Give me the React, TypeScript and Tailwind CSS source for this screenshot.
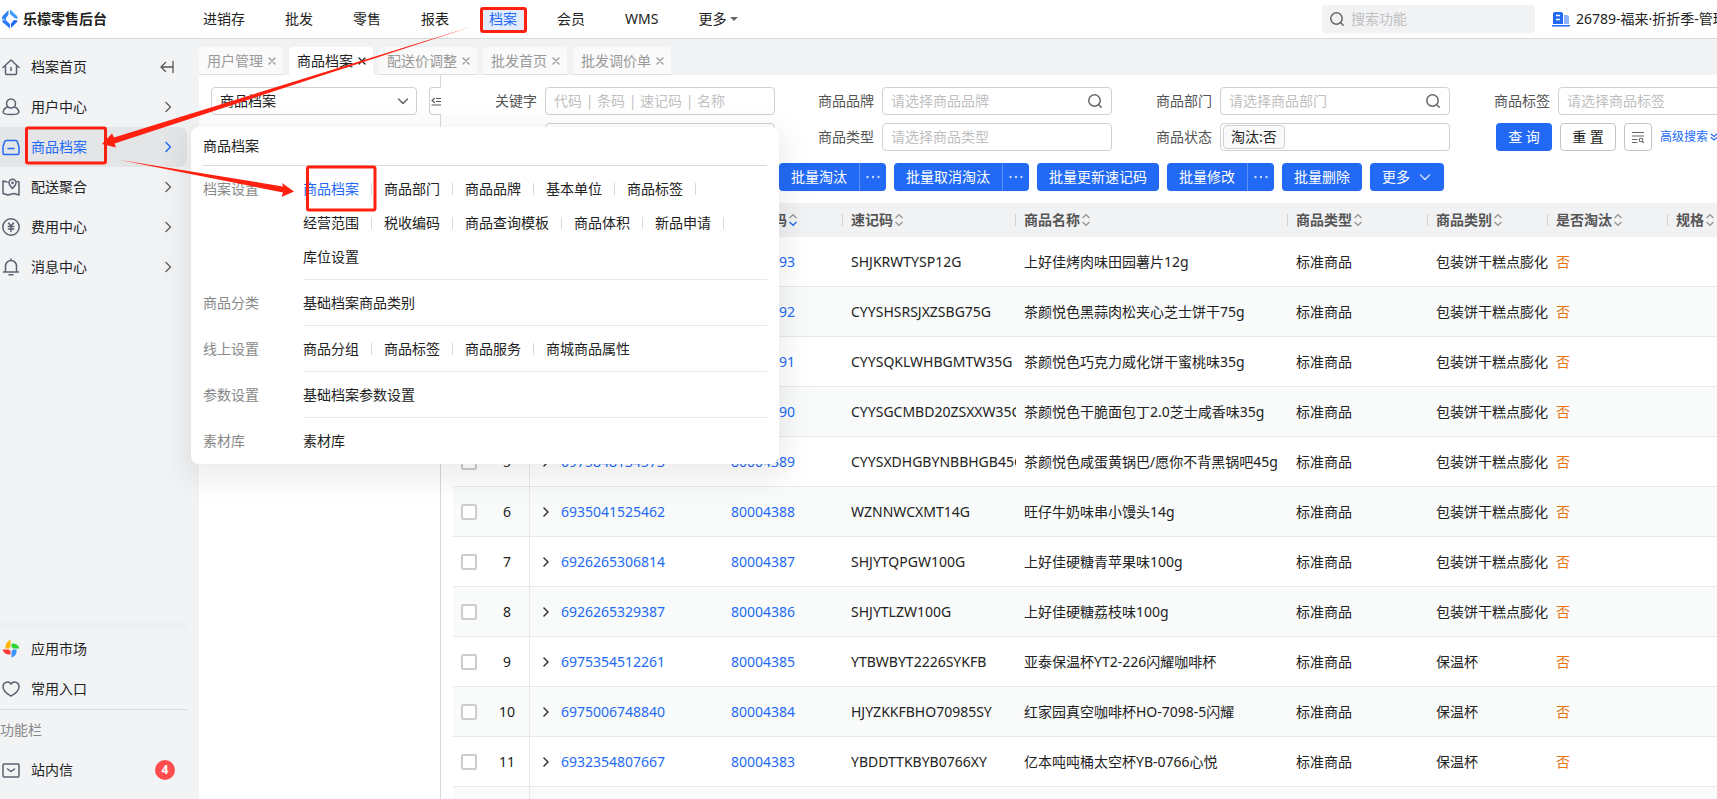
import { ReactNode } from "react";

type Row = { id: number; barcode: string; code: string; mnemonic: string; name: string; category: string };

const navItems = ["进销存", "批发", "零售", "报表", "档案", "会员", "WMS"];
const tabs = ["用户管理", "商品档案", "配送价调整", "批发首页", "批发调价单"];

const snack = "包装饼干糕点膨化";
const rows: Row[] = [
	{ id: 1, barcode: "6926265353061", code: "80004393", mnemonic: "SHJKRWTYSP12G", name: "上好佳烤肉味田园薯片12g", category: snack },
	{ id: 2, barcode: "6975848134597", code: "80004392", mnemonic: "CYYSHSRSJXZSBG75G", name: "茶颜悦色黑蒜肉松夹心芝士饼干75g", category: snack },
	{ id: 3, barcode: "6975848134580", code: "80004391", mnemonic: "CYYSQKLWHBGMTW35G", name: "茶颜悦色巧克力威化饼干蜜桃味35g", category: snack },
	{ id: 4, barcode: "6975848134566", code: "80004390", mnemonic: "CYYSGCMBD20ZSXXW35G", name: "茶颜悦色干脆面包丁2.0芝士咸香味35g", category: snack },
	{ id: 5, barcode: "6975848134573", code: "80004389", mnemonic: "CYYSXDHGBYNBBHGB45G", name: "茶颜悦色咸蛋黄锅巴/愿你不背黑锅吧45g", category: snack },
	{ id: 6, barcode: "6935041525462", code: "80004388", mnemonic: "WZNNWCXMT14G", name: "旺仔牛奶味串小馒头14g", category: snack },
	{ id: 7, barcode: "6926265306814", code: "80004387", mnemonic: "SHJYTQPGW100G", name: "上好佳硬糖青苹果味100g", category: snack },
	{ id: 8, barcode: "6926265329387", code: "80004386", mnemonic: "SHJYTLZW100G", name: "上好佳硬糖荔枝味100g", category: snack },
	{ id: 9, barcode: "6975354512261", code: "80004385", mnemonic: "YTBWBYT2226SYKFB", name: "亚泰保温杯YT2-226闪耀咖啡杯", category: "保温杯" },
	{ id: 10, barcode: "6975006748840", code: "80004384", mnemonic: "HJYZKKFBHO70985SY", name: "红家园真空咖啡杯HO-7098-5闪耀", category: "保温杯" },
	{ id: 11, barcode: "6932354807667", code: "80004383", mnemonic: "YBDDTTKBYB0766XY", name: "亿本吨吨桶太空杯YB-0766心悦", category: "保温杯" },
];

const sections = [
	{
		label: "档案设置",
		items: ["商品档案", "商品部门", "商品品牌", "基本单位", "商品标签", "经营范围", "税收编码", "商品查询模板", "商品体积", "新品申请", "库位设置"],
	},
	{ label: "商品分类", items: ["基础档案商品类别"] },
	{ label: "线上设置", items: ["商品分组", "商品标签", "商品服务", "商城商品属性"] },
	{ label: "参数设置", items: ["基础档案参数设置"] },
	{ label: "素材库", items: ["素材库"] },
];

const Icon = ({ children, size = 18, className = "" }: { children: ReactNode; size?: number; className?: string }) => (
	<svg
		width={size}
		height={size}
		viewBox={`0 0 ${size} ${size}`}
		fill="none"
		stroke="currentColor"
		strokeWidth="1.5"
		strokeLinecap="round"
		strokeLinejoin="round"
		aria-hidden="true"
		className={`shrink-0 ${className}`}>
		{children}
	</svg>
);

const SearchIcon = () => (
	<Icon size={16} className="text-[#666666]">
		<circle cx="7.5" cy="7.5" r="5.7" />
		<path d="M11.8 11.8 14.2 14.2" />
	</Icon>
);

const ChevronRight = () => (
	<Icon size={12}>
		<path d="M4 1.5 8.5 6 4 10.5" />
	</Icon>
);

const ExpandIcon = () => (
	<Icon size={10} className="text-[#333333]">
		<path d="M2 1 6 5 2 9" />
	</Icon>
);

const ChevronDown = ({ className = "" }: { className?: string }) => (
	<Icon size={12} className={className}>
		<path d="M1.5 4 6 8.5 10.5 4" />
	</Icon>
);

const Close = () => (
	<Icon size={8}>
		<path d="M1 1 7 7M7 1 1 7" strokeWidth="1.3" />
	</Icon>
);

const Sorter = ({ active = false }: { active?: boolean }) => (
	<svg width="8" height="14" viewBox="0 0 8 14" fill="none" strokeWidth="1.4" aria-hidden="true" className="shrink-0">
		<path d="M.5 5 4 1.8 7.500 5" stroke="#999999" />
		<path d="M.5 9 4 12.2 7.500 9" stroke={active ? "#226af5" : "#999999"} />
	</svg>
);

const menu = [
	{
		label: "用户中心",
		icon: (
			<>
				<circle cx="9" cy="5.500" r="4.500" />
				<path d="M5.500 9C3 10 1.200 12 1.200 14.200c0 3 15.600 3 15.600 0C16.800 12 15 10 12.500 9" />
			</>
		),
	},
	{
		label: "商品档案",
		icon: (
			<>
				<path d="M4.500 2.500h9q1.500 0 2 1.500L17 9v6q0 1.500-1.500 1.500h-13Q1 16.500 1 15V9L2.500 4Q3 2.500 4.500 2.500Z" />
				<path d="M6 10.500h6" />
			</>
		),
	},
	{
		label: "配送聚合",
		icon: (
			<>
				<path d="M5 4 1 3v12.500l5 1.500 6-1.500 5 1.500V4l-2-.500" />
				<path d="M10.500 10.500C8.500 8.500 7 7 7 4.800a3.500 3.500 0 0 1 7 0c0 2.200-1.500 3.700-3.500 5.700Z" />
				<circle cx="10.500" cy="4.800" r=".6" />
			</>
		),
	},
	{
		label: "费用中心",
		icon: (
			<>
				<circle cx="9" cy="9" r="8.200" />
				<path d="M6.500 5 9 8l2.500-3M9 8v5.500M6.300 8.500h5.400M6.300 11h5.400" />
			</>
		),
	},
	{
		label: "消息中心",
		icon: (
			<>
				<path d="M1.500 14h15M3.500 14V8a5.500 5.500 0 0 1 11 0v6M9 1v1.500M7 16.800h4" />
			</>
		),
	},
];

const MenuItem = ({ label, icon, active, children }: { label: string; icon: ReactNode; active?: boolean; children?: ReactNode }) => (
	<a
		href="#"
		className={`mr-3 flex h-10 items-center rounded-r-lg pl-[2px] pr-[13px] ${active ? "bg-[#e4e5e7] text-[#226af5]" : "text-[#222222]"}`}>
		<span className={active ? "text-[#226af5]" : "text-[#5c6070]"}>{icon}</span>
		<span className="ml-[11px] flex-1">{label}</span>
		{children}
	</a>
);

const Sidebar = () => (
	<aside className="flex w-[199px] shrink-0 flex-col bg-[#f1f3f5] pt-2">
		<nav>
			<MenuItem
				label="档案首页"
				icon={
					<Icon>
						<path d="M1 9.500 9 2 17 9.500M3.500 8V15.500q0 1 1 1h9q1 0 1-1V8M9 9.500v3" />
					</Icon>
				}>
				<Icon size={14} className="text-[#555555]">
					<path d="M5.500 2.500 1 7l4.500 4.500M1 7h11M13 1.500v11" strokeWidth="1.3" />
				</Icon>
			</MenuItem>
			{menu.map((m) => (
				<MenuItem key={m.label} label={m.label} active={m.label === "商品档案"} icon={<Icon>{m.icon}</Icon>}>
					<span className={m.label === "商品档案" ? "text-[#226af5]" : "text-[#666666]"}>
						<ChevronRight />
					</span>
				</MenuItem>
			))}
		</nav>
		<div className="mt-auto pb-[9px]">
			<div className="mr-3 h-2 bg-[#eff0f2]" />
			<MenuItem
				label="应用市场"
				icon={
					<svg width="18" height="18" viewBox="0 0 18 18" aria-hidden="true">
						<path d="M8.500 0C5 1.200 3 4.500 3.600 8.500h4.900Z" fill="#ffb400" />
						<path d="M17.500 8.500C16.500 5 13.500 3 9.500 3.500v5Z" fill="#2bd435" />
						<path d="M9.500 17.500C13 16.500 15 13.500 14.500 9.500h-5Z" fill="#3b94ff" />
						<path d="M.5 9.500C1.500 13 4.500 15 8.500 14.500v-5Z" fill="#ff3838" />
						<circle cx="9" cy="9" r="2" fill="#f1f3f5" />
					</svg>
				}
			/>
			<MenuItem
				label="常用入口"
				icon={
					<Icon>
						<path d="M9 4C7 .8 1.200 1.500 1 6.800.9 11 6 14.500 9 16.200c3-1.700 8.100-5.200 8-9.400C16.800 1.500 11 .8 9 4Z" />
					</Icon>
				}
			/>
			<div className="mr-3 border-t border-[#d8dadd]" />
			<div className="flex h-10 items-center text-[#888888]">功能栏</div>
			<MenuItem
				label="站内信"
				icon={
					<Icon>
						<rect x="1" y="3" width="16" height="13" rx="1" />
						<path d="M5.500 8 9 10.500 12.500 8" />
					</Icon>
				}>
				<span className="-mr-px flex size-5 items-center justify-center rounded-full bg-[#ff4d4f] text-xs font-bold text-white">4</span>
			</MenuItem>
		</div>
	</aside>
);

const Header = () => (
	<header className="flex h-[39px] items-center overflow-hidden whitespace-nowrap border-b border-[#d9d9d9] bg-white">
		<a href="#" className="flex w-[203px] shrink-0 items-center gap-[5px] pl-[2px] font-bold">
			<svg width="16" height="20" viewBox="0 0 16 20" aria-hidden="true">
				<path d="M6.500 1v4.500L4 9v2L0 10V8.500q0-1 1-2Z" fill="#2f86fb" />
				<path d="M8 .500 14.500 6.500q1 1 1 2V10L12.500 9 8 5Z" fill="#3f9cff" />
				<path d="M0 11.500l3.500-.500L8 15v4.500L1 13.500q-1-1-1-2Z" fill="#2a7bfa" />
				<path d="M15.500 11.500q0 1-1 2L9 19v-4.500L12 11Z" fill="#226af5" />
			</svg>
			<span>乐檬零售后台</span>
		</a>
		<nav className="flex flex-1 items-center gap-10">
			{navItems.map((n) => (
				<a key={n} href="#" className={n === "档案" ? "relative text-[#226af5]" : ""}>
					{n === "档案" && <span className="absolute -inset-x-2 -inset-y-[2px] bg-[#e3ecfd]" />}
					<span className="relative">{n}</span>
				</a>
			))}
			<button className="flex items-center gap-1">
				更多
				<svg width="8" height="4" viewBox="0 0 8 4" fill="#666666" aria-hidden="true">
					<path d="M0 0h8L4 4Z" />
				</svg>
			</button>
		</nav>
		<div className="flex w-[395px] shrink-0 items-center">
			<label className="flex h-7 w-[213px] shrink-0 items-center gap-[6px] rounded bg-[#f1f2f4] pl-[7px]">
				<SearchIcon />
				<input aria-label="搜索功能" placeholder="搜索功能" className="w-40 bg-transparent outline-none placeholder:text-[#bfbfbf]" />
			</label>
			<svg width="18" height="15" viewBox="0 0 18 15" aria-hidden="true" className="ml-[17px] shrink-0">
				<path d="M1 12V2q0-2 2-2h6q2 0 2 2v10Z" fill="#226af5" />
				<path d="M4 3.500h4M4 7.500h4" stroke="#ffffff" strokeWidth="1.5" />
				<path d="M12 3h3q2 0 2 2v7h-5Z" fill="#8db4fa" />
				<path d="M0 13h18v1.500H0Z" fill="#226af5" />
			</svg>
			<span className="ml-[6px]">26789-福来·折折季-管理</span>
		</div>
	</header>
);

const Tabs = () => (
	<div className="flex items-end gap-[6px] bg-[#f1f2f4] pt-2">
		{tabs.map((t) => (
			<div
				key={t}
				className={`flex h-7 items-center gap-[5px] whitespace-nowrap rounded-t pl-2 pr-[7px] ${
					t === "商品档案" ? "bg-white text-[#222222]" : "border-b border-[#dcdcdc] bg-[#fafafa] text-[#999999]"
				}`}>
				<a href="#">{t}</a>
				<button aria-label={`关闭${t}`}>
					<Close />
				</button>
			</div>
		))}
	</div>
);

const Field = ({ label, placeholder, search, tag }: { label: string; placeholder?: string; search?: boolean; tag?: string }) => (
	<label className="flex items-center justify-end gap-2 text-[#555555]">
		{label}
		<span className="flex h-7 w-[230px] items-center rounded border border-[#d0d0d0] bg-white pl-[2px] pr-2">
			{tag && <span className="shrink-0 rounded border border-[#d0d0d0] bg-[#fafafa] px-[7px] leading-[22px] text-[#222222]">{tag}</span>}
			<input placeholder={placeholder} className="w-full min-w-0 bg-transparent pl-[6px] outline-none placeholder:text-[#bfbfbf]" />
			{search && <SearchIcon />}
		</span>
	</label>
);

const Filters = () => (
	<div className="grid grid-cols-[334px_337px_338px_338px] gap-y-2 whitespace-nowrap pt-3">
		<Field label="关键字" placeholder="代码 | 条码 | 速记码 | 名称" />
		<Field label="商品品牌" placeholder="请选择商品品牌" search />
		<Field label="商品部门" placeholder="请选择商品部门" search />
		<Field label="商品标签" placeholder="请选择商品标签" />
		<Field label="商品类别" />
		<Field label="商品类型" placeholder="请选择商品类型" />
		<Field label="商品状态" tag="淘汰:否" />
		<div className="flex items-center gap-2 pl-[46px]">
			<button className="h-7 w-14 shrink-0 rounded bg-[#226af5] text-white">查 询</button>
			<button className="h-7 w-14 shrink-0 rounded border border-[#c4c4c4] bg-white">重 置</button>
			<button aria-label="筛选方案" className="flex size-7 shrink-0 items-center justify-center rounded border border-[#c4c4c4] text-[#666666]">
				<Icon size={12}>
					<path d="M0 1.500h12M0 5h12M0 8.500h5M0 11.500h5M10.500 10.500l1.200 1.200" strokeWidth="1.1" />
					<circle cx="9" cy="9" r="1.800" strokeWidth="1.1" />
				</Icon>
			</button>
			<a href="#" className="flex shrink-0 items-center gap-[2px] text-xs text-[#226af5]">
				高级搜索
				<Icon size={8}>
					<path d="M1 1l3 2.500L7 1M1 4.500 4 7l3-2.500" strokeWidth="1.1" />
				</Icon>
			</a>
		</div>
	</div>
);

const actions = [
	{ label: "批量淘汰", split: true },
	{ label: "批量取消淘汰", split: true },
	{ label: "批量更新速记码" },
	{ label: "批量修改", split: true },
	{ label: "批量删除" },
];

const Toolbar = () => (
	<div className="flex gap-2 whitespace-nowrap py-3 pl-[338px] text-white">
		{actions.map((a) => (
			<div key={a.label} className="flex h-7 shrink-0 overflow-hidden rounded bg-[#226af5] shadow-xs">
				<button className="px-3">{a.label}</button>
				{a.split && (
					<button aria-label={`${a.label}选项`} className="flex w-[27px] items-center justify-center border-l border-[#5b91f8]">
						<svg width="14" height="4" viewBox="0 0 14 4" fill="#c9dbfd" aria-hidden="true">
							<circle cx="1.500" cy="2" r="1.200" />
							<circle cx="7" cy="2" r="1.200" />
							<circle cx="12.500" cy="2" r="1.200" />
						</svg>
					</button>
				)}
			</div>
		))}
		<button className="flex h-7 shrink-0 items-center gap-2 rounded bg-[#226af5] px-3 shadow-xs">
			更多
			<ChevronDown className="mx-px text-[#c9dbfd]" />
		</button>
	</div>
);

const columns = ["商品条码", "商品代码", "速记码", "商品名称", "商品类型", "商品类别", "是否淘汰", "规格"];

const GoodsTable = () => (
	<table className="ml-3 w-[1334px] table-fixed border-separate border-spacing-0 whitespace-nowrap">
		<colgroup>
			<col className="w-8" />
			<col className="w-[45px]" />
			<col className="w-[193px]" />
			<col className="w-[120px]" />
			<col className="w-[173px]" />
			<col className="w-[272px]" />
			<col className="w-[140px]" />
			<col className="w-[120px]" />
			<col className="w-[120px]" />
			<col className="w-[119px]" />
		</colgroup>
		<thead>
			<tr className="h-[34px] bg-[#f1f2f4] text-left text-[#555555]">
				<th />
				<th />
				{columns.map((c) => (
					<th key={c} className="p-0 font-bold">
						<div className="flex h-3 items-center gap-[2px] border-r border-[#d0d0d0] pl-2">
							{c}
							<Sorter active={c === "商品代码"} />
						</div>
					</th>
				))}
			</tr>
		</thead>
		<tbody className="[&_td]:border-b [&_td]:border-[#e8e8e8] [&_td]:p-0">
			{rows.map((r) => (
				<tr key={r.id} className="h-[50px] even:bg-[#f9fbfb]">
					<td>
						<input
							type="checkbox"
							aria-label={`选择 ${r.name}`}
							className="ml-2 block size-4 appearance-none rounded-[2px] border-2 border-[#cccccc] bg-white"
						/>
					</td>
					<td className="border-r text-center">{r.id}</td>
					<td>
						<div className="flex items-center gap-[9px] pl-3">
							<button aria-label="展开">
								<ExpandIcon />
							</button>
							<a href="#" className="text-[#226af5]">
								{r.barcode}
							</a>
						</div>
					</td>
					<td>
						<a href="#" className="ml-2 text-[#226af5]">
							{r.code}
						</a>
					</td>
					<td>
						<div className="ml-2 overflow-hidden">{r.mnemonic}</div>
					</td>
					<td>
						<div className="ml-2">{r.name}</div>
					</td>
					<td>
						<div className="ml-2">标准商品</div>
					</td>
					<td>
						<div className="ml-2">{r.category}</div>
					</td>
					<td>
						<div className="ml-2 text-[#e8730c]">否</div>
					</td>
					<td />
				</tr>
			))}
			<tr className="h-[50px] even:bg-[#f9fbfb]">
				<td />
				<td className="border-r" />
				<td colSpan={8} />
			</tr>
		</tbody>
	</table>
);

const MenuPanel = () => (
	<div className="absolute left-[191px] top-[127px] w-[588px] rounded-lg bg-white px-3 shadow-[0_9px_28px_8px_rgba(0,0,0,0.07)]">
		<div className="flex h-[39px] items-center border-b border-[#d9d9d9]">商品档案</div>
		{sections.map((s) => (
			<div key={s.label} className="group flex leading-[22px]">
				<div className="w-[100px] shrink-0 pt-3 text-[#888888]">{s.label}</div>
				<div className="flex flex-1 flex-wrap gap-y-3 border-b border-[#e8e8e8] pb-[11px] pt-3 group-last:border-transparent">
					{s.items.map((item, j) => (
						<div key={item} className="flex items-center">
							<a href="#" className={s.label === "档案设置" && j === 0 ? "text-[#226af5]" : ""}>
								{item}
							</a>
							{j < s.items.length - 1 && <span className="mx-3 h-3 w-px bg-[#d9d9d9]" />}
						</div>
					))}
				</div>
			</div>
		))}
	</div>
);

// Red guide marks: top menu -> side menu -> panel entry
const Marks = () => (
	<svg width="540" height="230" viewBox="0 0 540 230" fill="#ff2010" aria-hidden="true" className="pointer-events-none absolute left-0 top-0">
		<g fill="none" stroke="#ff2010" strokeWidth="3">
			<rect x="481.500" y="8.500" width="44" height="23" rx="1.500" />
			<rect x="26.500" y="128" width="79" height="35" rx="1.500" />
			<rect x="307.500" y="167" width="67.500" height="43" rx="1.500" />
		</g>
		<path d="M472 26.500 114 137.500 112 133.500 102 144 116 147.500 114.500 143.500Z" />
		<path d="M120 160 283 186.500 282 183 294 191.500 281.500 197 283 192.500Z" />
	</svg>
);

const App = () => (
	<div className="relative flex h-screen flex-col overflow-hidden bg-white font-['Noto_Sans','Noto_Sans_CJK_SC',sans-serif] text-[14px] leading-5 text-[#222222]">
		<Header />
		<div className="flex min-h-0 flex-1">
			<Sidebar />
			<main className="flex min-w-0 flex-1 flex-col">
				<Tabs />
				<div className="flex min-h-0 flex-1">
					<div className="flex w-[242px] shrink-0 items-start justify-between border-r border-[#d9d9d9] pl-3 pt-3">
						<div className="relative w-[206px]">
							<select aria-label="档案类型" className="h-7 w-full appearance-none rounded border border-[#d0d0d0] bg-white pl-2">
								<option>商品档案</option>
							</select>
							<ChevronDown className="pointer-events-none absolute right-2 top-2 text-[#666666]" />
						</div>
						<button
							aria-label="收起"
							className="-mr-px flex h-7 w-3 items-center justify-center rounded-l border border-r-0 border-[#d0d0d0] bg-white text-[#555555]">
							<Icon size={10}>
								<path d="M3.500 2.500 1 4.500l2.500 2M5.500 2.500H10M5.500 5.500H10M1 9h9" strokeWidth="1.2" />
							</Icon>
						</button>
					</div>
					<div className="min-w-0 flex-1 overflow-hidden">
						<Filters />
						<Toolbar />
						<GoodsTable />
					</div>
				</div>
			</main>
		</div>
		<MenuPanel />
		<Marks />
	</div>
);

export default App;
